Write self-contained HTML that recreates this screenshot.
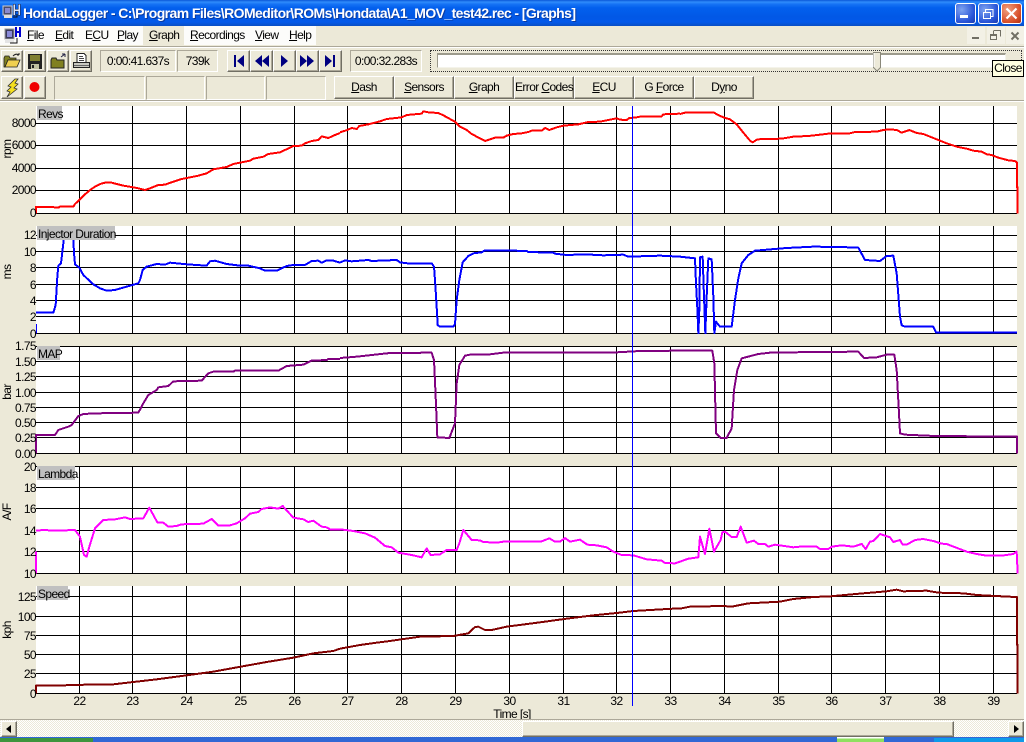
<!DOCTYPE html>
<html><head><meta charset="utf-8"><title>HondaLogger</title>
<style>
html,body{margin:0;padding:0;background:#fff}
#w{position:relative;width:1026px;height:742px;overflow:hidden;background:#fff;font:12px "Liberation Sans",sans-serif;letter-spacing:-.6px;color:#000}
#c{position:absolute;left:0;top:0;width:1024px;height:742px;background:#ece9d8;overflow:hidden}
#c div{position:absolute;box-sizing:border-box}
.t{left:0;top:0;width:1024px;height:26px;background:linear-gradient(#0a57d8 0,#2f8cfb 8%,#1673f5 16%,#0360ee 30%,#0258e6 65%,#0359ea 85%,#0a4fc4 100%)}
.m{top:26px;height:19px;line-height:19px;padding-left:0;white-space:nowrap}
.b{background:#ece9d8;border:1px solid;border-color:#fff #716f64 #716f64 #fff;box-shadow:inset -1px -1px #aca899;text-align:center;line-height:21px;white-space:nowrap}
.s{border:1px solid;border-color:#aca899 #fff #fff #aca899;text-align:center;line-height:20px}
.x{border:1px solid #fff;border-radius:3px}
u{text-decoration:underline}
svg{position:absolute;left:0;top:0;display:block}
</style></head><body>
<div id="w"><div id="c">
<div class="t"></div>
<svg width="1024" height="26" style="z-index:2"><text x="23" y="18" font-family="Liberation Sans" font-weight="bold" font-size="14" fill="#0a3aa0" textLength="553" lengthAdjust="spacing" transform="translate(1 1)" letter-spacing="0">HondaLogger - C:\Program Files\ROMeditor\ROMs\Hondata\A1_MOV_test42.rec - [Graphs]</text><text x="23" y="18" font-family="Liberation Sans" font-weight="bold" font-size="14" fill="#fff" textLength="553" lengthAdjust="spacing" letter-spacing="0">HondaLogger - C:\Program Files\ROMeditor\ROMs\Hondata\A1_MOV_test42.rec - [Graphs]</text>
<g shape-rendering="crispEdges"><rect x="3" y="6" width="9" height="9" fill="#4a4a6a" stroke="#ccc"/><rect x="5" y="8" width="5" height="5" fill="#8a8ad0"/><rect x="4" y="15" width="8" height="3" fill="#ddd"/><path d="M13 4h2v5h3V4h2v11h-2v-4h-3v4h-2z" fill="#d8e4ff" stroke="#223" stroke-width=".5"/><path d="M13 17h4v-3" stroke="#111" fill="none"/></g></svg>
<div class="x" style="left:955px;top:3px;width:21px;height:21px;background:radial-gradient(circle at 30% 30%,#7ea3f0,#2a55d8 65%,#1a3cb0)"></div>
<div class="x" style="left:978px;top:3px;width:21px;height:21px;background:radial-gradient(circle at 30% 30%,#7ea3f0,#2a55d8 65%,#1a3cb0)"></div>
<div class="x" style="left:1001px;top:3px;width:21px;height:21px;background:radial-gradient(circle at 30% 30%,#f0a080,#d8502a 65%,#b03010)"></div>
<svg width="1024" height="26" style="z-index:3" shape-rendering="crispEdges"><rect x="960" y="15" width="8" height="3" fill="#fff"/><path d="M985 9.5h8v7h-2M985.5 9v3M983.5 12.500h7v6h-7z" fill="none" stroke="#fff"/><path d="M1006.500 8.500l10 10M1016.500 8.500l-10 10" stroke="#fff" stroke-width="2.200" shape-rendering="auto"/></svg>

<div style="left:0;top:26px;width:316px;height:19px;background:#fcfcfa"></div>
<div style="left:143px;top:26px;width:41px;height:19px;background:#ece9d8"></div>
<div class="m" style="left:27px"><u>F</u>ile</div>
<div class="m" style="left:55px"><u>E</u>dit</div>
<div class="m" style="left:85px">E<u>C</u>U</div>
<div class="m" style="left:117px"><u>P</u>lay</div>
<div class="m" style="left:149px"><u>G</u>raph</div>
<div class="m" style="left:190px"><u>R</u>ecordings</div>
<div class="m" style="left:255px"><u>V</u>iew</div>
<div class="m" style="left:289px"><u>H</u>elp</div>
<svg width="24" height="46" shape-rendering="crispEdges"><rect x="5" y="29" width="9" height="10" fill="#3a3a5a" stroke="#999"/><rect x="7" y="31" width="5" height="6" fill="#8a8ad8"/><rect x="5" y="39" width="9" height="4" fill="#e4e4e4"/><path d="M15 27h2v4h2v-4h2v10h-2v-4h-2v4h-2z" fill="#0000d0"/><path d="M10 43h7v-5" stroke="#111" fill="none"/></svg>
<div style="left:967px;top:27px;width:18px;height:17px;background:#f3f1e6"></div>
<div style="left:987px;top:27px;width:18px;height:17px;background:#f3f1e6"></div>
<div style="left:1006px;top:27px;width:18px;height:17px;background:#f3f1e6"></div>
<svg width="1024" height="46" shape-rendering="crispEdges" style="z-index:3"><rect x="972" y="37" width="7" height="2" fill="#716f64"/><path d="M993.500 30.500h7v6M993.500 31v3M990.500 34.500h6v5h-6zM990 35.500h7" fill="none" stroke="#716f64"/><path d="M1011.500 32.500l7 7M1018.500 32.500l-7 7" stroke="#716f64" stroke-width="2" shape-rendering="auto"/></svg>

<div style="left:0;top:46px;width:1024px;height:1px;background:#aca899"></div>
<div style="left:0;top:47px;width:1024px;height:1px;background:#fff"></div>

<div class="b" style="left:1px;top:50px;width:22px;height:22px"><svg width="20" height="20"><path d="M2 16V7l1-2h4l1 2h6v2H6L3 16z" fill="#7f7f20" stroke="#222" stroke-width=".8"/><path d="M3 16l3-7h12l-3 7z" fill="#f0d050" stroke="#222" stroke-width=".8"/><path d="M11 5q3-3 6-1m0 0v-2m0 2h-2" fill="none" stroke="#222"/></svg></div>
<div class="b" style="left:24px;top:50px;width:22px;height:22px"><svg width="20" height="20" shape-rendering="crispEdges"><path d="M3 3h14v15H3z" fill="#222"/><rect x="5" y="4" width="10" height="6" fill="#808030"/><rect x="6" y="13" width="8" height="5" fill="#c0c0a0"/><rect x="7" y="14" width="2" height="3" fill="#222"/></svg></div>
<div class="b" style="left:47px;top:50px;width:22px;height:22px"><svg width="20" height="20"><path d="M3 17V9l1-2h4l1 2h7v8z" fill="#808020" stroke="#222"/><path d="M13 6l4-3m0 0h-3m3 0v3" fill="none" stroke="#224"/></svg></div>
<div class="b" style="left:70px;top:50px;width:22px;height:22px"><svg width="20" height="20" shape-rendering="crispEdges"><path d="M6 2.500h7l2 2v7H6z" fill="#fff" stroke="#222"/><path d="M8 5.500h4M8 7.500h5M8 9.500h5" stroke="#444"/><path d="M2.500 11.500h16v5h-16z" fill="#c8c8c0" stroke="#222"/><path d="M3 14.500h15" stroke="#666"/></svg></div>

<div class="s" style="left:100px;top:50px;width:76px;height:22px">0:00:41.637s</div>
<div class="s" style="left:177px;top:50px;width:41px;height:22px">739k</div>

<div class="b" style="left:227px;top:50px;width:23px;height:22px"><svg width="21" height="20"><path d="M6 4h2v12H6zM16 4v12L9 10z" fill="#000080"/></svg></div>
<div class="b" style="left:250px;top:50px;width:23px;height:22px"><svg width="21" height="20"><path d="M11 4v12L4 10zM18 4v12l-7-6z" fill="#000080"/></svg></div>
<div class="b" style="left:273px;top:50px;width:23px;height:22px"><svg width="21" height="20"><path d="M7 4v12l7-6z" fill="#000080"/></svg></div>
<div class="b" style="left:296px;top:50px;width:23px;height:22px"><svg width="21" height="20"><path d="M3 4v12l7-6zM10 4v12l7-6z" fill="#000080"/></svg></div>
<div class="b" style="left:319px;top:50px;width:23px;height:22px"><svg width="21" height="20"><path d="M5 4v12l7-6zM13 4h2v12h-2z" fill="#000080"/></svg></div>

<div class="s" style="left:350px;top:50px;width:72px;height:22px">0:00:32.283s</div>

<div style="left:430px;top:50px;width:592px;height:22px;border:1px dotted #333"></div>
<div style="left:437px;top:53px;width:569px;height:15px;background:#fff;border:1px solid;border-color:#9c9a8c #f4f3ea #f4f3ea #9c9a8c;border-top-width:2px"></div>
<svg width="1024" height="76" style="z-index:2"><path d="M873.500 52.500h7v15l-3.500 3.500-3.500-3.500z" fill="#ece9d8" stroke="#8a887a"/><path d="M874 53v14" stroke="#fff"/></svg>

<div class="b" style="left:1px;top:76px;width:22px;height:23px"><svg width="20" height="21"><path d="M13 2L6 9l3 1-4 4 3 1-3 5 10-8-3-1 4-4-3-1 3-4z" fill="#f5e020" stroke="#333" stroke-width=".8"/></svg></div>
<div class="b" style="left:24px;top:76px;width:22px;height:23px"><svg width="20" height="21"><circle cx="9.500" cy="10" r="5" fill="#f00000"/></svg></div>

<div class="s" style="left:54px;top:76px;width:91px;height:24px"></div>
<div class="s" style="left:146px;top:76px;width:59px;height:24px"></div>
<div class="s" style="left:206px;top:76px;width:59px;height:24px"></div>
<div class="s" style="left:266px;top:76px;width:60px;height:24px"></div>

<div class="b" style="left:334px;top:76px;width:60px;height:23px"><u>D</u>ash</div>
<div class="b" style="left:394px;top:76px;width:60px;height:23px"><u>S</u>ensors</div>
<div class="b" style="left:454px;top:76px;width:60px;height:23px"><u>G</u>raph</div>
<div class="b" style="left:514px;top:76px;width:60px;height:23px">Error <u>C</u>odes</div>
<div class="b" style="left:574px;top:76px;width:60px;height:23px"><u>E</u>CU</div>
<div class="b" style="left:634px;top:76px;width:60px;height:23px">G <u>F</u>orce</div>
<div class="b" style="left:694px;top:76px;width:60px;height:23px">D<u>y</u>no</div>

<div style="left:0;top:100px;width:1024px;height:1px;background:#aca899"></div>
<div style="left:0;top:101px;width:1024px;height:1px;background:#fff"></div>

<svg width="1024" height="742" font-family="Liberation Sans" font-size="12" style="z-index:1">
<defs>
<path id="v" d="M79.500 0v107M132.500 0v107M186.500 0v107M240.500 0v107M294.500 0v107M347.500 0v107M401.500 0v107M455.500 0v107M509.500 0v107M563.500 0v107M616.500 0v107M670.500 0v107M724.500 0v107M778.500 0v107M831.500 0v107M885.500 0v107M939.500 0v107M993.500 0v107"/>
<clipPath id="p2"><rect x="36" y="226" width="981" height="108"/></clipPath>
</defs>
<g fill="#fff"><rect x="36" y="106" width="981" height="107"/><rect x="36" y="226" width="981" height="107"/><rect x="36" y="346" width="981" height="107"/><rect x="36" y="466" width="981" height="107"/><rect x="36" y="586" width="981" height="107"/></g>
<g stroke="#000" fill="none" shape-rendering="crispEdges">
<use href="#v" y="106"/><use href="#v" y="226"/><use href="#v" y="346"/><use href="#v" y="466"/><use href="#v" y="586"/>
<path d="M36 123.500h981M36 145.500h981M36 168.500h981M36 190.500h981M36 213.500h981"/>
<path d="M36 235.500h981M36 251.500h981M36 267.500h981M36 284.500h981M36 300.500h981M36 316.500h981M36 333.500h981"/>
<path d="M36 346.500h981M36 361.500h981M36 376.500h981M36 392.500h981M36 407.500h981M36 422.500h981M36 437.500h981M36 453.500h981"/>
<path d="M36 466.500h981M36 487.500h981M36 508.500h981M36 530.500h981M36 551.500h981M36 573.500h981"/>
<path d="M36 596.500h981M36 616.500h981M36 635.500h981M36 654.500h981M36 673.500h981M36 693.500h981"/>
</g>

<g fill="none" stroke-width="6" stroke-linejoin="round" shape-rendering="crispEdges">
<g stroke="#ff0000">
<polyline transform="translate(0 100) scale(.33333)" points="108,340 108,321 160,321 165,323 175,323 180,320 220,320 225,312 238,300 255,283 270,270 285,260 300,252 315,248 335,248 350,252 370,257 395,261 415,265 435,270 450,265 475,255 495,254 520,245 545,237 570,232 595,227 620,220 640,208 680,201 700,192 720,188 750,182 760,176 790,170 805,162 840,157 855,150 880,138 905,137 915,130 935,123 955,120 965,109 985,114 1005,105 1020,99"/>
<polyline transform="translate(340 100) scale(.33333)" points="0,97 22,90 35,84 50,87 58,78 85,73 120,64 140,57 185,52 200,45 245,41 250,34 265,37 295,39 310,46 330,57 345,65 360,80 380,90 395,102 420,115 435,123 450,118 465,113 490,113 500,107 520,102 545,100 565,96 575,92 605,92 615,84 628,90 650,82 670,77 715,73 745,66 780,65 810,59 830,55 840,59 860,60 868,54 890,52 905,49 965,49 970,43 990,42 1020,41"/>
<polyline transform="translate(680 100) scale(.33333)" points="0,42 15,38 103,38 110,43 130,52 150,58 170,73 190,98 210,122 218,127 232,118 260,117 305,116 340,110 385,108 420,104 445,101 490,100 505,101 525,96 590,95 610,90 630,88 650,90 665,98 688,90 710,99 730,102 770,118 800,130 830,140 860,146 880,152 905,155 920,163 935,165 955,173 985,181 1005,183 1011,188 1011,262 1013,262 1013,340"/>
</g>
<g stroke="#0000ff" clip-path="url(#p2)">
<polyline transform="translate(0 100) scale(.33333)" points="108,700 108,672"/>
<polyline transform="translate(0 100) scale(.33333)" points="108,638 160,638 167,615 172,530 175,497 183,490 190,430 195,370 218,370 222,460 225,493 238,503 250,525 280,553 300,565 320,572 345,570 380,560 415,550 420,540 428,510 440,500 470,492 495,494 510,488 560,493 620,497 630,484 645,482 680,492 720,497 745,497 780,505 795,512 830,512 860,498 880,495 915,495 935,483 955,482 965,488 980,481 1000,482 1020,488"/>
<polyline transform="translate(340 100) scale(.33333)" points="0,488 15,481 35,484 85,480 95,483 170,480 180,487 210,491 235,490 275,490 282,500 285,540 290,620 293,675 300,680 340,680 345,672 350,600 358,540 368,487 385,468 400,460 425,457 435,451 480,451 560,453 565,456 640,458 645,461 680,465 735,463 790,466 850,464 865,470 895,469 960,467 1020,470"/>
<polyline transform="translate(680 100) scale(.33333)" points="0,470 45,475 48,550 52,625 55,700 58,630 60,472 68,470 72,590 76,700 80,590 85,475 95,478 100,590 103,700 108,665 120,680 155,680 165,600 175,535 185,490 205,465 225,452 320,444 400,440 480,441 535,443 555,480 600,483 620,468 640,467 650,520 660,650 665,676 675,680 760,680 768,697 1013,698"/>
</g>
<g stroke="#800080">
<polyline transform="translate(0 340) scale(.33333)" points="108,340 108,316 108,285 165,285 175,270 205,260 215,255 235,228 250,222 290,220 415,218 430,190 445,165 470,150 475,142 505,138 520,124 605,122 625,100 640,95 700,95 705,92 835,92 860,78 910,74 935,62 980,60 985,57 1020,57"/>
<polyline transform="translate(340 340) scale(.33333)" points="0,54 50,50 150,39 275,38 282,60 287,170 292,292 328,294 345,250 350,130 358,75 375,47 390,44 450,43 490,38 830,37 900,33 1020,32"/>
<polyline transform="translate(680 340) scale(.33333)" points="0,32 97,32 103,70 108,280 122,294 140,294 155,265 162,150 172,90 185,55 235,42 270,38 405,36 535,35 552,54 590,52 620,44 643,44 650,90 657,220 660,280 675,284 765,288 1011,290 1011,340"/>
</g>
<g stroke="#ff00ff">
<polyline transform="translate(0 340) scale(.33333)" points="108,700 108,635"/>
<polyline transform="translate(0 340) scale(.33333)" points="108,572 130,570 165,572 225,570 240,590 252,645 260,650 268,620 285,565 310,540 345,538 375,532 390,537 430,535 448,503 472,547 490,548 505,560 530,558 545,553 610,551 635,537 655,557 690,556 710,550 735,535 750,521 775,516 785,507 810,502 835,506 848,498 880,533 910,538 925,546 940,542 965,560 980,562 990,568 1020,568"/>
<polyline transform="translate(340 340) scale(.33333)" points="0,568 40,573 75,580 105,593 135,618 155,622 175,638 215,645 245,652 260,625 272,645 300,643 320,630 350,630 358,610 370,570 395,600 420,601 430,606 470,608 490,605 590,605 605,604 628,595 645,605 660,605 675,594 690,605 720,599 742,614 770,616 800,622 820,635 845,645 880,646 920,658 965,662 975,669 1005,670 1020,665"/>
<polyline transform="translate(680 340) scale(.33333)" points="0,665 25,656 55,652 60,590 75,642 88,566 102,635 122,600 127,577 135,575 155,591 170,591 182,560 200,608 222,602 235,612 255,612 265,620 285,614 340,622 360,620 410,620 420,627 445,627 455,620 485,616 520,620 545,612 557,627 570,605 580,603 600,582 630,592 640,606 660,600 668,614 680,614 705,600 730,597 760,603 785,611 800,612 860,635 890,642 920,647 965,647 1000,642 1010,635 1013,700"/>
</g>
<g stroke="#800000">
<polyline transform="translate(0 340) scale(.33333)" points="108,1060 108,1037 195,1037 200,1035 340,1033 400,1026 470,1018 560,1006 640,995 700,984 800,966 880,953 940,940 1000,933 1020,926"/>
<polyline transform="translate(340 340) scale(.33333)" points="0,926 60,915 110,908 150,903 240,890 340,888 385,880 405,861 415,860 435,870 455,870 500,860 600,847 680,836 760,826 830,819 880,813 1000,806 1020,806"/>
<polyline transform="translate(680 340) scale(.33333)" points="0,806 30,800 130,798 155,800 205,790 300,785 340,777 400,771 450,769 550,760 620,754 650,749 670,754 740,752 775,758 850,760 890,765 1005,771 1011,771 1011,915 1013,915 1013,1060"/>
</g>
</g>

<g fill="#c0c0c0"><rect x="37" y="106" width="25" height="14"/><rect x="37" y="226" width="78" height="14"/><rect x="37" y="346" width="23" height="14"/><rect x="37" y="466" width="38" height="14"/><rect x="37" y="586" width="31" height="14"/></g>
<g fill="#000" letter-spacing="-.6">
<text x="38" y="118">Revs</text><text x="38" y="238">Injector Duration</text><text x="38" y="358">MAP</text><text x="38" y="478">Lambda</text><text x="38" y="598">Speed</text>
</g>
<g text-anchor="end" fill="#000" letter-spacing="-.6">
<text x="36" y="127">8000</text><text x="36" y="149">6000</text><text x="36" y="172">4000</text><text x="36" y="194">2000</text><text x="36" y="217">0</text>
<text x="36" y="239">12</text><text x="36" y="256">10</text><text x="36" y="272">8</text><text x="36" y="289">6</text><text x="36" y="305">4</text><text x="36" y="321">2</text><text x="36" y="338">0</text>
<text x="36" y="350">1.75</text><text x="36" y="366">1.50</text><text x="36" y="381">1.25</text><text x="36" y="397">1.00</text><text x="36" y="412">0.75</text><text x="36" y="427">0.50</text><text x="36" y="442">0.25</text><text x="36" y="458">0.00</text>
<text x="36" y="471">20</text><text x="36" y="492">18</text><text x="36" y="513">16</text><text x="36" y="535">14</text><text x="36" y="556">12</text><text x="36" y="578">10</text>
<text x="36" y="601">125</text><text x="36" y="621">100</text><text x="36" y="640">75</text><text x="36" y="659">50</text><text x="36" y="678">25</text><text x="36" y="698">0</text>
</g>
<g text-anchor="middle" fill="#000" letter-spacing="-.6">
<text transform="rotate(-90 11 149)" x="11" y="149">rpm</text>
<text transform="rotate(-90 11 272)" x="11" y="272">ms</text>
<text transform="rotate(-90 11 392)" x="11" y="392">bar</text>
<text transform="rotate(-90 11 512)" x="11" y="512">A/F</text>
<text transform="rotate(-90 11 630)" x="11" y="630">kph</text>
<text x="79.500" y="705">22</text><text x="132.500" y="705">23</text><text x="186.500" y="705">24</text><text x="240.500" y="705">25</text><text x="294.500" y="705">26</text><text x="347.500" y="705">27</text><text x="401.500" y="705">28</text><text x="455.500" y="705">29</text><text x="509.500" y="705">30</text><text x="563.500" y="705">31</text><text x="616.500" y="705">32</text><text x="670.500" y="705">33</text><text x="724.500" y="705">34</text><text x="778.500" y="705">35</text><text x="831.500" y="705">36</text><text x="885.500" y="705">37</text><text x="939.500" y="705">38</text><text x="993.500" y="705">39</text>
<text x="512" y="718">Time [s]</text>
</g>
<rect x="632" y="106" width="1" height="600" fill="#0000ff"/>
</svg>

<div style="left:0;top:719px;width:1024px;height:1px;background:#aca899;z-index:2"></div>
<svg width="1024" height="742" style="z-index:2"><defs><pattern id="d" width="2" height="2" patternUnits="userSpaceOnUse"><rect width="2" height="2" fill="#fff"/><rect width="1" height="1" fill="#ece9d8"/><rect x="1" y="1" width="1" height="1" fill="#ece9d8"/></pattern></defs><rect x="0" y="720" width="1024" height="17" fill="url(#d)"/></svg>
<div class="b" style="left:1px;top:721px;width:16px;height:16px;z-index:3"><svg width="14" height="14"><path d="M9 3v8L4 7z" fill="#000"/></svg></div>
<div class="b" style="left:522px;top:721px;width:432px;height:16px;z-index:3"></div>
<div class="b" style="left:1008px;top:721px;width:16px;height:16px;z-index:3"><svg width="14" height="14"><path d="M5 3v8l5-4z" fill="#000"/></svg></div>

<div style="left:0;top:737px;width:1024px;height:5px;background:#3168d5;z-index:3"></div>
<div style="left:0;top:738px;width:93px;height:4px;background:#3d953d;z-index:3"></div>
<div style="left:837px;top:737px;width:47px;height:5px;background:linear-gradient(#fff 0,#fff 20%,#8fe060 40%);z-index:3"></div>
<div style="left:934px;top:738px;width:90px;height:4px;background:#0f9ae8;z-index:3"></div>

<div style="left:992px;top:60px;width:32px;height:17px;background:#ffffe1;border:1px solid #000;text-align:center;line-height:15px;z-index:5">Close</div>
</div></div>
</body></html>
